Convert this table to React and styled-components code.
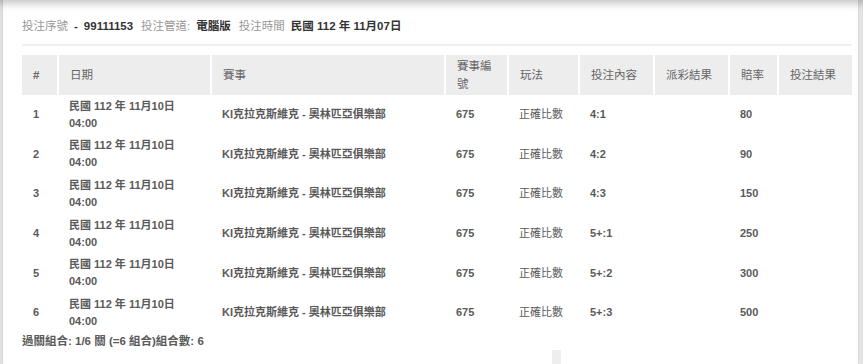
import React from "react";
import styled, { createGlobalStyle } from "styled-components";

const GlobalStyle = createGlobalStyle`
  html, body {
    margin: 0;
    padding: 0;
    background: #e6e6e6;
  }
  body {
    font-family: "Liberation Sans", "Noto Sans CJK TC", Arial, sans-serif;
  }
`;

const rows = [
  { id: 1, pick: "4:1", odds: "80" },
  { id: 2, pick: "4:2", odds: "90" },
  { id: 3, pick: "4:3", odds: "150" },
  { id: 4, pick: "5+:1", odds: "250" },
  { id: 5, pick: "5+:2", odds: "300" },
  { id: 6, pick: "5+:3", odds: "500" },
];

const columns = [
  { label: "#", width: 36, bold: true },
  { label: "日期", width: 153 },
  { label: "賽事", width: 234 },
  { label: "賽事編號", width: 63 },
  { label: "玩法", width: 71 },
  { label: "投注內容", width: 75 },
  { label: "派彩結果", width: 75 },
  { label: "賠率", width: 49 },
  { label: "投注結果", width: 74 },
];

const App = () => {
  return (
    <React.Fragment>
      <GlobalStyle />
      <Page>
        <Card>
          <InfoLine>
            <Label>投注序號</Label>
            <Value>-</Value>
            <Value>99111153</Value>
            <Label>投注管道:</Label>
            <Value>電腦版</Value>
            <Label>投注時間</Label>
            <Value>民國 112 年 11月07日</Value>
          </InfoLine>
          <Divider />
          <Table>
            <colgroup>
              {columns.map((c) => (
                <col key={c.label} style={{ width: c.width }} />
              ))}
            </colgroup>
            <thead>
              <tr>
                {columns.map((c) => (
                  <Th key={c.label} $bold={c.bold}>
                    {c.label === "賽事編號" ? (
                      <>
                        賽事編
                        <br />號
                      </>
                    ) : (
                      c.label
                    )}
                  </Th>
                ))}
              </tr>
            </thead>
            <tbody>
              {rows.map((r) => (
                <tr key={r.id}>
                  <Td>{r.id}</Td>
                  <Td>
                    民國 112 年 11月10日
                    <br />
                    04:00
                  </Td>
                  <Td>KI克拉克斯維克 - 奧林匹亞俱樂部</Td>
                  <Td>675</Td>
                  <Td $light>正確比數</Td>
                  <Td>{r.pick}</Td>
                  <Td></Td>
                  <Td>{r.odds}</Td>
                  <Td></Td>
                </tr>
              ))}
            </tbody>
          </Table>
          <Summary>過關組合: 1/6 關 (=6 組合)組合數: 6</Summary>
          <BottomStub />
        </Card>
      </Page>
    </React.Fragment>
  );
};

const Page = styled.div`
  display: flex;
  padding: 0 5px 0 3px;
  height: 364px;
  overflow: hidden;
  box-shadow: inset 0 9px 9px -6px rgba(0, 0, 0, 0.25);
`;

const Card = styled.div`
  flex: 1;
  background: #fff;
  padding: 18px 6px 0 19px;
  box-shadow: inset 0 9px 9px -6px rgba(0, 0, 0, 0.25),
    0 0 3px rgba(0, 0, 0, 0.12);
`;

const InfoLine = styled.div`
  display: flex;
  align-items: center;
  gap: 6px;
  font-size: 11.5px;
  line-height: 17px;
`;

const Label = styled.span`
  color: #999;
  margin-left: 2px;

  &:first-child {
    margin-left: 0;
  }
`;

const Value = styled.span`
  color: #333;
  font-weight: bold;
`;

const Divider = styled.div`
  height: 2px;
  background: #f0f0f0;
  margin: 9px 0 9px;
`;

const Table = styled.table`
  width: 830px;
  table-layout: fixed;
  border-collapse: collapse;
  font-size: 11px;
`;

const Th = styled.th`
  height: 38px;
  padding: 2px 8px 2px 11px;
  background: #ededed;
  color: #666;
  font-size: 11.5px;
  font-weight: ${(p) => (p.$bold ? "bold" : "normal")};
  text-align: left;
  line-height: 18px;
  border-right: 2px solid #fff;
  box-sizing: border-box;

  &:last-child {
    border-right: none;
  }
`;

const Td = styled.td`
  padding: 2.8px 8px 2.8px 11px;
  line-height: 17px;
  color: #5a5a5a;
  font-weight: ${(p) => (p.$light ? "normal" : "bold")};
  vertical-align: middle;
  white-space: nowrap;
`;

const Summary = styled.div`
  font-size: 11.5px;
  line-height: 17px;
  font-weight: bold;
  color: #5a5a5a;
`;

const BottomStub = styled.div`
  width: 9px;
  height: 20px;
  margin: 0 0 0 530px;
  background: #eeeeee;
`;

export default App;
